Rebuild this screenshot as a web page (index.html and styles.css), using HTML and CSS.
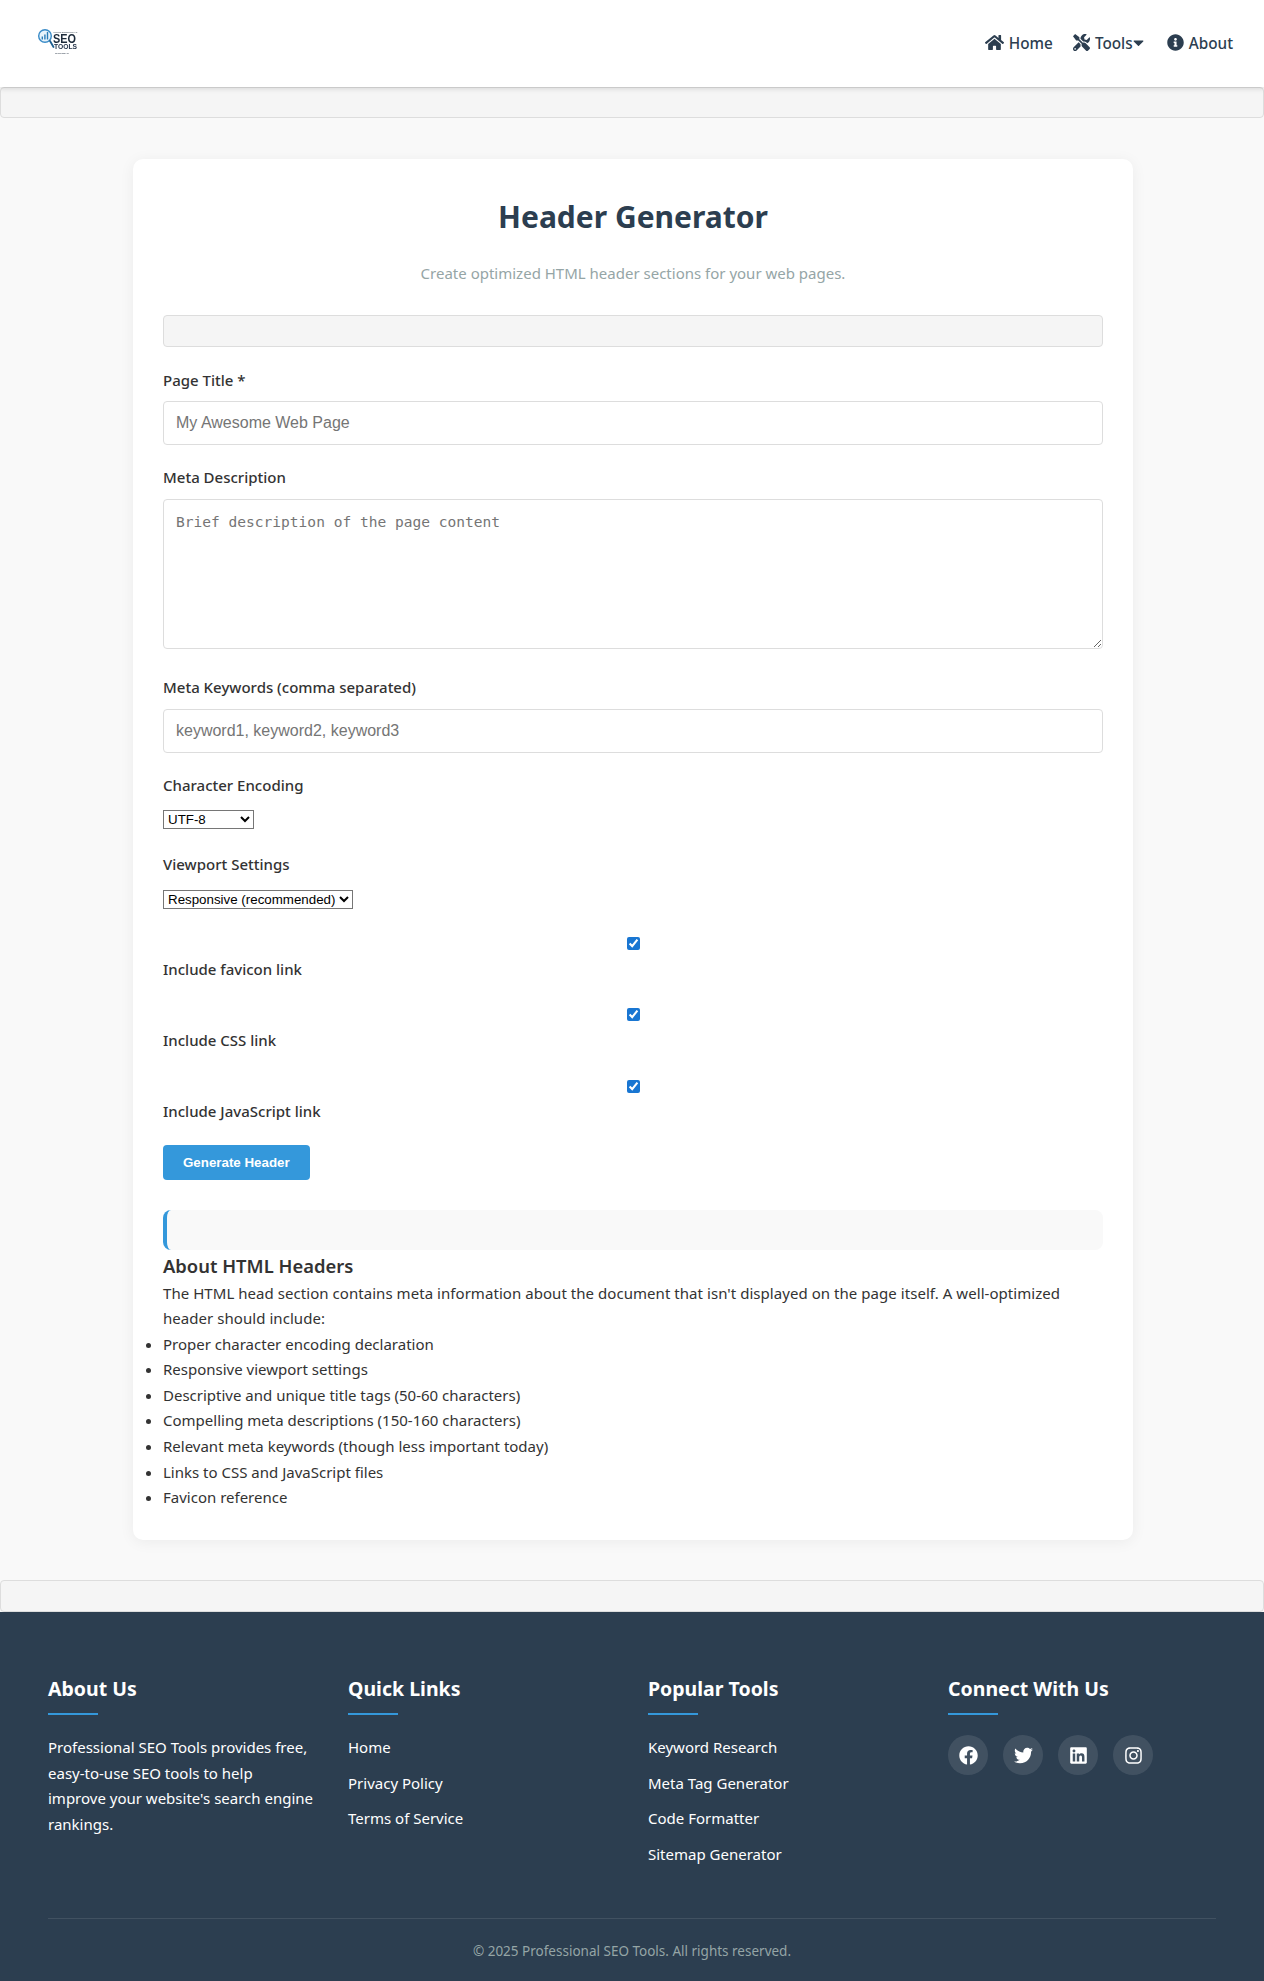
FILE: index.html
```html
<!DOCTYPE html>
<html lang="en">
<head>
<meta charset="utf-8">
<title>Header Generator</title>
<link rel="stylesheet" href="styles.css">
</head>
<body>
<header class="site-header">
  <a class="logo" href="#" aria-label="Professional SEO Tools Script">
    <svg class="logo-svg" viewBox="0 0 42 28" width="42" height="28">
      <circle cx="8" cy="9" r="6.300" fill="#e8f3fb" stroke="#3a8cc8" stroke-width="1.400"/>
      <rect x="4.600" y="9.500" width="1.400" height="3" fill="#2c7db8"/>
      <rect x="7.200" y="7.500" width="1.400" height="5" fill="#2c7db8"/>
      <rect x="9.800" y="5" width="1.400" height="7.500" fill="#2c7db8"/>
      <path d="M13 14l3.500 6" stroke="#1f5f8f" stroke-width="1.800" stroke-linecap="round"/>
      <text x="16.500" y="6" class="logo-tiny" textLength="24" lengthAdjust="spacingAndGlyphs">PROFESSIONAL</text>
      <text x="16" y="16" class="logo-seo" textLength="23" lengthAdjust="spacingAndGlyphs">SEO</text>
      <text x="17" y="22" class="logo-tools" textLength="23" lengthAdjust="spacingAndGlyphs">TOOLS</text>
      <text x="18" y="26.500" class="logo-tiny" textLength="14" lengthAdjust="spacingAndGlyphs">SCRIPT</text>
    </svg>
  </a>
  <nav class="main-nav">
    <a class="nav-item" href="#">
      <svg class="nav-icon home-icon" viewBox="0 0 576 512"><path d="M280.37 148.26L96 300.11V464a16 16 0 0 0 16 16l112.06-.29a16 16 0 0 0 15.92-16V368a16 16 0 0 1 16-16h64a16 16 0 0 1 16 16v95.64a16 16 0 0 0 16 16.05L464 480a16 16 0 0 0 16-16V300L295.67 148.26a12.19 12.19 0 0 0-15.3 0zM571.6 251.47L488 182.56V44.05a12 12 0 0 0-12-12h-56a12 12 0 0 0-12 12v72.61L318.47 43a48 48 0 0 0-61 0L4.34 251.47a12 12 0 0 0-1.6 16.9l25.5 31A12 12 0 0 0 45.15 301l235.22-193.74a12.19 12.19 0 0 1 15.3 0L530.9 301a12 12 0 0 0 16.9-1.6l25.5-31a12 12 0 0 0-1.7-16.93z"/></svg>
      <span>Home</span>
    </a>
    <a class="nav-item" href="#">
      <svg class="nav-icon" viewBox="0 0 512 512"><path d="M501.1 395.7L384 278.6c-23.1-23.1-57.6-27.6-85.4-13.9L192 158.1V96L64 0 0 64l96 128h62.1l106.6 106.6c-13.6 27.8-9.2 62.3 13.9 85.4l117.1 117.1c14.6 14.6 38.2 14.6 52.7 0l52.7-52.7c14.5-14.6 14.5-38.2 0-52.7zM331.7 225c28.3 0 54.9 11 74.9 31l19.4 19.4c15.8-6.9 30.8-16.5 43.8-29.5 37.1-37.1 49.7-89.3 37.9-136.7-2.2-9-13.5-12.1-20.1-5.5l-74.4 74.4-67.9-11.3L334 98.9l74.4-74.4c6.6-6.6 3.4-17.9-5.7-20.2-47.4-11.7-99.6.9-136.6 37.9-28.5 28.5-41.9 66.1-41.2 103.6l82.1 82.1c8.1-1.9 16.5-2.9 24.7-2.9zm-103.9 82l-56.7-56.7L18.7 402.8c-25 25-25 65.5 0 90.5s65.5 25 90.5 0l123.6-123.6c-7.6-19.9-9.9-41.6-5-62.7zM64 472c-13.2 0-24-10.8-24-24 0-13.3 10.7-24 24-24s24 10.7 24 24c0 13.2-10.7 24-24 24z"/></svg>
      <span class="tools-label">Tools</span>
      <svg class="caret-icon" viewBox="0 0 320 512"><path d="M31.3 192h257.3c17.8 0 26.7 21.5 14.1 34.1L174.1 354.8c-7.800 7.800-20.500 7.800-28.300 0L17.200 226.100C4.600 213.500 13.500 192 31.300 192z"/></svg>
    </a>
    <a class="nav-item" href="#">
      <svg class="nav-icon" viewBox="0 0 512 512"><path d="M256 8C119.043 8 8 119.083 8 256c0 136.997 111.043 248 248 248s248-111.003 248-248C504 119.083 392.957 8 256 8zm0 110c23.196 0 42 18.804 42 42s-18.804 42-42 42-42-18.804-42-42 18.804-42 42-42zm56 254c0 6.627-5.373 12-12 12h-88c-6.627 0-12-5.373-12-12v-24c0-6.627 5.373-12 12-12h12v-64h-12c-6.627 0-12-5.373-12-12v-24c0-6.627 5.373-12 12-12h64c6.627 0 12 5.373 12 12v100h12c6.627 0 12 5.373 12 12v24z"/></svg>
      <span>About</span>
    </a>
  </nav>
</header>

<div class="ad-bar"></div>

<main class="page-main">
  <section class="tool-card">
    <h1 class="tool-title">Header Generator</h1>
    <p class="tool-subtitle">Create optimized HTML header sections for your web pages.</p>
    <div class="notice-bar"></div>

    <form class="tool-form">
      <div class="form-group">
        <label class="field-label" for="title">Page Title *</label>
        <input class="text-input" id="title" type="text" placeholder="My Awesome Web Page">
      </div>
      <div class="form-group textarea-group">
        <label class="field-label" for="desc">Meta Description</label>
        <textarea class="text-area" id="desc" placeholder="Brief description of the page content"></textarea>
      </div>
      <div class="form-group">
        <label class="field-label" for="keys">Meta Keywords (comma separated)</label>
        <input class="text-input" id="keys" type="text" placeholder="keyword1, keyword2, keyword3">
      </div>
      <div class="form-group">
        <label class="field-label" for="enc">Character Encoding</label>
        <div class="select-line"><select class="plain-select enc-select" id="enc"><option>UTF-8</option><option>ISO-8859</option></select></div>
      </div>
      <div class="form-group">
        <label class="field-label" for="view">Viewport Settings</label>
        <div class="select-line"><select class="plain-select" id="view"><option>Responsive (recommended)</option></select></div>
      </div>
      <div class="form-group">
        <div class="check-line"><input class="check-input" id="fav" type="checkbox" checked></div>
        <label class="check-label" for="fav">Include favicon link</label>
      </div>
      <div class="form-group">
        <div class="check-line"><input class="check-input" id="css" type="checkbox" checked></div>
        <label class="check-label" for="css">Include CSS link</label>
      </div>
      <div class="form-group">
        <div class="check-line"><input class="check-input" id="js" type="checkbox" checked></div>
        <label class="check-label" for="js">Include JavaScript link</label>
      </div>
      <button class="generate-btn" type="button">Generate Header</button>
    </form>

    <div class="result-box"></div>

    <h3 class="about-title">About HTML Headers</h3>
    <p class="about-text">The HTML head section contains meta information about the document that isn't displayed on the page itself. A well-optimized header should include:</p>
    <ul class="about-list">
      <li>Proper character encoding declaration</li>
      <li>Responsive viewport settings</li>
      <li>Descriptive and unique title tags (50-60 characters)</li>
      <li>Compelling meta descriptions (150-160 characters)</li>
      <li>Relevant meta keywords (though less important today)</li>
      <li>Links to CSS and JavaScript files</li>
      <li>Favicon reference</li>
    </ul>
  </section>
</main>

<div class="ad-bar ad-bar-bottom"></div>

<footer class="site-footer">
  <div class="footer-grid">
    <div class="footer-col">
      <h3 class="footer-heading">About Us</h3>
      <p class="footer-about">Professional SEO Tools provides free, easy-to-use SEO tools to help<br>improve your website's search engine rankings.</p>
    </div>
    <div class="footer-col">
      <h3 class="footer-heading">Quick Links</h3>
      <ul class="footer-links">
        <li><a href="#">Home</a></li>
        <li><a href="#">Privacy Policy</a></li>
        <li><a href="#">Terms of Service</a></li>
      </ul>
    </div>
    <div class="footer-col">
      <h3 class="footer-heading">Popular Tools</h3>
      <ul class="footer-links">
        <li><a href="#">Keyword Research</a></li>
        <li><a href="#">Meta Tag Generator</a></li>
        <li><a href="#">Code Formatter</a></li>
        <li><a href="#">Sitemap Generator</a></li>
      </ul>
    </div>
    <div class="footer-col">
      <h3 class="footer-heading">Connect With Us</h3>
      <div class="social-row">
        <a class="social-link" href="#" aria-label="Facebook"><svg class="social-icon" viewBox="0 0 512 512"><path d="M504 256C504 119 393 8 256 8S8 119 8 256c0 123.78 90.69 226.38 209.25 245V327.69h-63V256h63v-54.64c0-62.15 37-96.48 93.67-96.48 27.14 0 55.52 4.84 55.52 4.84v61h-31.28c-30.8 0-40.41 19.12-40.41 38.73V256h68.78l-11 71.69h-57.78V501C413.31 482.38 504 379.78 504 256z"/></svg></a>
        <a class="social-link" href="#" aria-label="Twitter"><svg class="social-icon" viewBox="0 0 512 512"><path d="M459.37 151.716c.325 4.548.325 9.097.325 13.645 0 138.72-105.583 298.558-298.558 298.558-59.452 0-114.68-17.219-161.137-47.106 8.447.974 16.568 1.299 25.34 1.299 49.055 0 94.213-16.568 130.274-44.832-46.132-.975-84.792-31.188-98.112-72.772 6.498.974 12.995 1.624 19.818 1.624 9.421 0 18.843-1.3 27.614-3.573-48.081-9.747-84.143-51.98-84.143-102.985v-1.299c13.969 7.797 30.214 12.67 47.431 13.319-28.264-18.843-46.781-51.005-46.781-87.391 0-19.492 5.197-37.36 14.294-52.954 51.655 63.675 129.3 105.258 216.365 109.807-1.624-7.797-2.599-15.918-2.599-24.04 0-57.828 46.782-104.934 104.934-104.934 30.213 0 57.502 12.67 76.67 33.137 23.715-4.548 46.456-13.32 66.599-25.34-7.798 24.366-24.366 44.833-46.132 57.827 21.117-2.273 41.584-8.122 60.426-16.243-14.292 20.791-32.161 39.308-52.628 54.253z"/></svg></a>
        <a class="social-link" href="#" aria-label="LinkedIn"><svg class="social-icon" viewBox="0 0 448 512"><path d="M416 32H31.9C14.3 32 0 46.5 0 64.3v383.4C0 465.5 14.3 480 31.9 480H416c17.6 0 32-14.5 32-32.3V64.3c0-17.8-14.4-32.3-32-32.3zM135.4 416H69V202.2h66.5V416zm-33.2-243c-21.3 0-38.5-17.3-38.5-38.5S80.9 96 102.2 96c21.2 0 38.5 17.3 38.5 38.5 0 21.3-17.2 38.5-38.5 38.5zm282.1 243h-66.4V312c0-24.8-.5-56.7-34.5-56.7-34.6 0-39.9 27-39.9 54.9V416h-66.4V202.2h63.7v29.2h.9c8.9-16.8 30.6-34.5 62.9-34.5 67.2 0 79.7 44.3 79.7 101.9V416z"/></svg></a>
        <a class="social-link" href="#" aria-label="Instagram"><svg class="social-icon" viewBox="0 0 448 512"><path d="M224.1 141c-63.6 0-114.9 51.3-114.9 114.9s51.3 114.9 114.9 114.9S339 319.5 339 255.9 287.7 141 224.1 141zm0 189.6c-41.1 0-74.7-33.5-74.7-74.7s33.5-74.7 74.7-74.7 74.7 33.5 74.7 74.7-33.6 74.7-74.7 74.7zm146.4-194.3c0 14.9-12 26.8-26.8 26.8-14.9 0-26.8-12-26.8-26.8s12-26.8 26.8-26.8 26.8 12 26.8 26.8zm76.1 27.2c-1.7-35.9-9.9-67.7-36.2-93.9-26.2-26.2-58-34.4-93.9-36.2-37-2.1-147.9-2.1-184.9 0-35.8 1.7-67.6 9.9-93.9 36.1s-34.4 58-36.2 93.9c-2.1 37-2.1 147.9 0 184.9 1.7 35.9 9.9 67.7 36.2 93.9s58 34.4 93.9 36.2c37 2.1 147.9 2.1 184.9 0 35.9-1.7 67.7-9.9 93.9-36.2 26.2-26.2 34.4-58 36.2-93.9 2.1-37 2.1-147.8 0-184.8zM398.8 388c-7.8 19.6-22.9 34.7-42.6 42.6-29.5 11.7-99.5 9-132.1 9s-102.7 2.6-132.1-9c-19.6-7.8-34.7-22.9-42.6-42.6-11.7-29.5-9-99.5-9-132.1s-2.6-102.7 9-132.1c7.8-19.6 22.9-34.7 42.6-42.6 29.5-11.7 99.5-9 132.1-9s102.7-2.6 132.1 9c19.6 7.8 34.7 22.9 42.6 42.6 11.7 29.5 9 99.5 9 132.1s2.7 102.7-9 132.1z"/></svg></a>
      </div>
    </div>
  </div>
  <div class="footer-bottom">© 2025 Professional SEO Tools. All rights reserved.</div>
</footer>
</body>
</html>
```
FILE: styles.css
```css
* { box-sizing: border-box; }
html, body { margin: 0; padding: 0; }
body {
  font-family: "Noto Sans", "Open Sans", sans-serif;
  font-size: 15px;
  line-height: 25.6px;
  color: #333;
  background: #f9f9f9;
}
a { color: inherit; text-decoration: none; }

.site-header {
  position: relative;
  z-index: 2;
  height: 87px;
  background: #fff;
  box-shadow: 0 2px 5px rgba(0, 0, 0, .12);
  display: flex;
  justify-content: space-between;
  align-items: center;
  padding: 0 31px 0 37px;
}
.logo { display: block; margin-top: -5px; }
.logo-svg { display: block; filter: blur(.25px); }
.logo-tiny { font: 700 2.500px "Liberation Sans", sans-serif; fill: #5a6470; }
.logo-seo { font: 700 13px "Liberation Sans", sans-serif; fill: #1c2a3a; }
.logo-tools { font: 700 6.500px "Liberation Sans", sans-serif; fill: #24344a; }

.main-nav { display: flex; align-items: center; gap: 20px; color: #2c3e50; font-weight: 500; font-size: 15.300px; }
.nav-item { display: flex; align-items: center; gap: 5px; }
.nav-icon { width: 17px; height: 17px; fill: #2c3e50; margin-top: -3px; }
.home-icon { width: 19px; }
.tools-label { margin-right: -5px; }
.caret-icon { width: 11px; height: 17px; fill: #2c3e50; margin-top: -2px; margin-right: 3px; }

.ad-bar {
  height: 31px;
  background: #f5f5f5;
  border: 1px solid #ddd;
  border-radius: 4px;
}
.ad-bar-bottom { height: 32px; }

.page-main { padding: 41px 0 40px 2px; }
.tool-card {
  width: 1000px;
  margin: 0 auto;
  background: #fff;
  border-radius: 10px;
  box-shadow: 0 2px 15px rgba(0, 0, 0, .06);
  padding: 30px 30px 29px;
}
.tool-title {
  margin: 0 0 16.500px;
  text-align: center;
  font-size: 30px;
  line-height: 55.200px;
  font-weight: 700;
  color: #2c3e50;
}
.tool-subtitle { margin: 0 0 28.500px; text-align: center; color: #95a5a6; }
.notice-bar {
  height: 32px;
  margin-bottom: 21px;
  background: #f5f5f5;
  border: 1px solid #ddd;
  border-radius: 4px;
}
.form-group { margin-bottom: 20px; }
.textarea-group { margin-bottom: 26px; }
.field-label { display: block; margin-bottom: 8px; font-weight: 500; }
.text-input, .text-area {
  display: block;
  width: 100%;
  border: 1px solid #ddd;
  border-radius: 4px;
  padding: 12px;
  background: #fff;
  font-size: 16px;
}
.text-input { height: 44px; font-family: "Liberation Sans", sans-serif; }
.text-area {
  height: 150px;
  font-family: "DejaVu Sans Mono", monospace;
  font-size: 14.550px;
  line-height: 20px;
}
.select-line { height: 25.600px; display: flex; align-items: center; }
.plain-select {
  font-family: "Liberation Sans", sans-serif;
  font-size: 13.333px;
  height: 19px;
  margin-top: 2px;
  padding: 0;
  background: #fff;
  color: #000;
  border: 1px solid #767676;
  border-radius: 0;
}
.enc-select { width: 91px; }
.check-line { height: 25.600px; display: flex; justify-content: center; align-items: center; }
.check-input { margin: 0; width: 13px; height: 13px; accent-color: #1976d2; }
.check-label { display: block; font-weight: 500; }
.generate-btn {
  display: block;
  height: 35px;
  padding: 0 20px;
  border: 0;
  border-radius: 4px;
  background: #3498db;
  color: #fff;
  font: 700 13.333px "Liberation Sans", sans-serif;
}
.result-box {
  height: 40px;
  margin-top: 30px;
  background: #f9f9f9;
  border-left: 4px solid #3498db;
  border-radius: 8px;
}
.about-title { margin: 0; font-size: 18.400px; line-height: 31px; font-weight: 600; }
.about-text { margin: 0; letter-spacing: .05px; }
.about-list { margin: 0; padding: 0; }

.site-footer {
  background: #2c3e50;
  color: #fff;
  padding: 60px 48px 0;
  height: 369px;
}
.footer-grid { display: grid; grid-template-columns: repeat(4, 1fr); gap: 32px; height: 246px; }
.footer-heading {
  position: relative;
  margin: 0 0 20px;
  padding-bottom: 10px;
  font-size: 19.500px;
  line-height: 33.280px;
  font-weight: 700;
}
.footer-heading::after {
  content: "";
  position: absolute;
  left: 0;
  bottom: 0;
  width: 50px;
  height: 2px;
  background: #3498db;
}
.footer-about { margin: 1px 0 0; }
.footer-links { list-style: none; margin: 1px 0 0; padding: 0; }
.footer-links li { margin-bottom: 10px; }
.social-row { display: flex; gap: 15px; }
.social-link {
  width: 40px;
  height: 40px;
  border-radius: 50%;
  background: rgba(255, 255, 255, .1);
  display: flex;
  align-items: center;
  justify-content: center;
}
.social-icon { width: 19px; height: 19px; fill: #fff; }
.footer-bottom {
  border-top: 1px solid rgba(255, 255, 255, .1);
  padding-top: 20px;
  text-align: center;
  font-size: 13.500px;
  color: #95a5a6;
}
```
